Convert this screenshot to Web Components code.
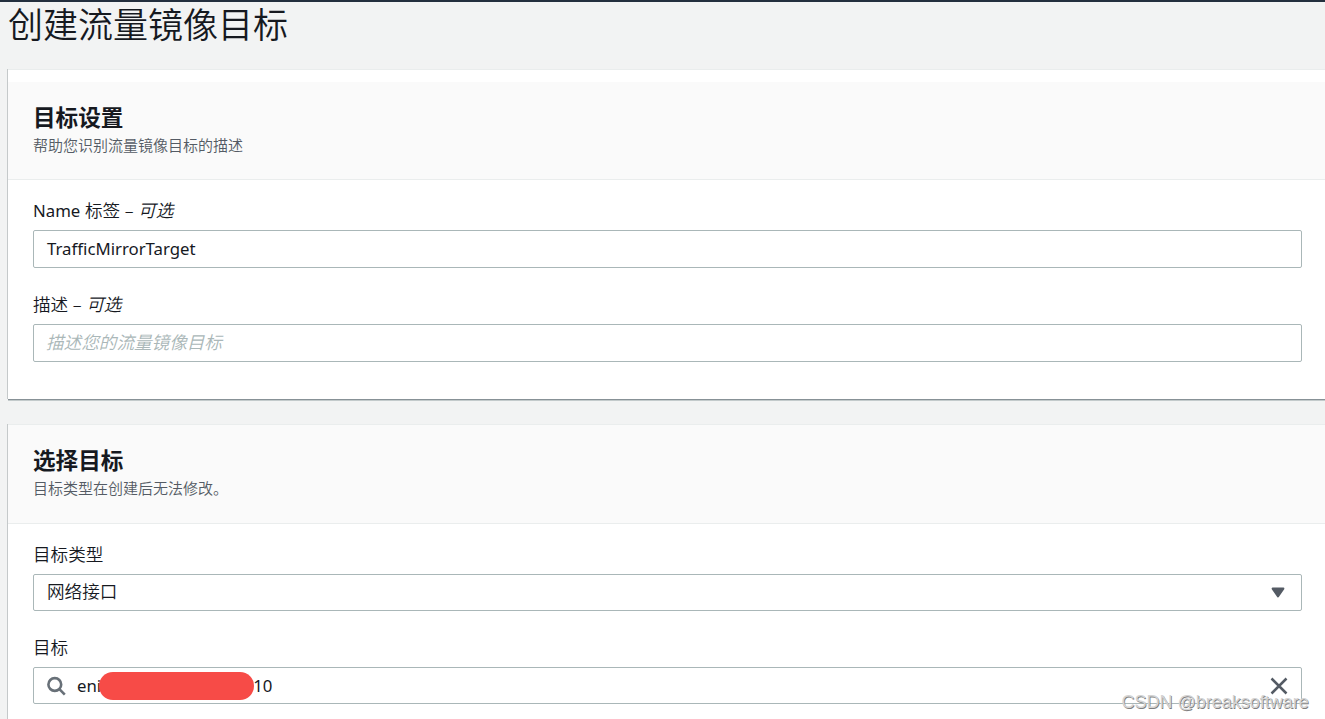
<!DOCTYPE html>
<html lang="zh-CN">
<head>
<meta charset="utf-8">
<title>创建流量镜像目标</title>
<style>
html,body{margin:0;height:719px;overflow:hidden;background:#f2f3f3}
body{font-family:"Noto Sans","Noto Sans CJK SC",sans-serif;color:#16191f}
</style>
</head>
<body>
<mirror-page>
  <mirror-panel class="first" heading="目标设置" note="帮助您识别流量镜像目标的描述">
    <form-field><span slot="label"><latin-text>Name</latin-text> 标签 – <i>可选</i></span>
      <text-box><latin-text>TrafficMirrorTarget</latin-text></text-box></form-field>
    <form-field><span slot="label">描述 – <i>可选</i></span>
      <text-box placeholder>描述您的流量镜像目标</text-box></form-field>
  </mirror-panel>
  <mirror-panel class="last" heading="选择目标" note="目标类型在创建后无法修改。">
    <form-field><span slot="label">目标类型</span>
      <text-box compact class="select">网络接口
        <svg slot="end" width="18" height="12" viewBox="0 0 18 12"><path d="M2.6 1.6h10.8L8 9.4z" fill="#545b64" stroke="#545b64" stroke-width="2" stroke-linejoin="round"/></svg>
      </text-box></form-field>
    <form-field><span slot="label">目标</span>
      <text-box compact>
        <svg slot="start" width="20" height="20" viewBox="0 0 20 20" fill="none" stroke="#687078" stroke-width="2.6"><circle cx="7.8" cy="8.5" r="6.4"/><path d="M12.4 13.2L17.8 18.6"/></svg>
        <redacted-value></redacted-value>
        <svg slot="end" width="18" height="18" viewBox="0 0 18 18" fill="none" stroke="#545b64" stroke-width="2.5"><path d="M1.5 1.5l15 15M16.5 1.5l-15 15"/></svg>
      </text-box></form-field>
  </mirror-panel>
</mirror-page>
<water-mark>CSDN @breaksoftware</water-mark>
<script>
const define = (name, html, setup) => customElements.define(name, class extends HTMLElement {
  constructor() {
    super();
    const t = document.createElement('template');
    t.innerHTML = html;
    this.attachShadow({mode: 'open'}).append(t.content.cloneNode(true));
    if (setup) setup(this, this.shadowRoot);
  }
});

define('latin-text', `<style>:host{display:inline;font-family:"Noto Sans",sans-serif;font-size:16.8px;font-weight:400}</style><slot></slot>`);

define('mirror-page', `<style>
:host{display:flex;flex-direction:column;box-sizing:border-box;height:719px;border-top:2px solid #232f3e;padding-left:8px}
h1{flex:none;margin:0;height:67px;font-size:35px;line-height:46px;font-weight:350;white-space:nowrap}
</style><h1>创建流量镜像目标</h1><slot></slot>`);

define('mirror-panel', `<style>
:host{display:block;box-sizing:border-box;flex:none;height:330px;margin-bottom:25px;background:#fff;border-top:1px solid #eaeded;box-shadow:-1px 0 0 #c5c9ca,0 1px 0 #879196,0 2px 0 #c3cacb}
:host(.first){padding-top:12px}
:host(.last){flex:1;height:auto;min-height:0;margin-bottom:0}
header{box-sizing:border-box;height:99px;padding:20px 25px 0;background:#fafafa;border-bottom:1px solid #eaeded}
:host(.first) header{height:98px}
h2{margin:0;font-size:22.6px;line-height:32px;font-weight:700}
p{margin:0;font-size:15px;line-height:23px;font-weight:350;color:#545b64}
section{display:flex;flex-direction:column;gap:23px;padding:17px 23px 0 25px}
</style><header><h2></h2><p></p></header><section><slot></slot></section>`, (el, root) => {
  root.querySelector('h2').textContent = el.getAttribute('heading');
  root.querySelector('p').textContent = el.getAttribute('note');
});

define('form-field', `<style>
:host{display:flex;flex-direction:column;font-size:17.6px;font-weight:350}
.label{height:33px;line-height:26px;white-space:nowrap}
</style><div class="label"><slot name="label"></slot></div><slot></slot>`);

define('text-box', `<style>
:host{display:flex;align-items:center;box-sizing:border-box;height:38px;padding:0 13px;border:1px solid #aab7b8;border-radius:2px;background:#fff;white-space:nowrap}
:host([compact]){height:37px}
:host([placeholder]){color:#aab7b8;font-style:italic;padding-left:12px}
.value{flex:1;line-height:26px;padding-bottom:2px}
:host(.select) .value{padding-bottom:4px}
::slotted(svg){flex:none;display:block}
</style><slot name="start"></slot><div class="value"><slot></slot></div><slot name="end"></slot>`);

define('redacted-value', `<style>
:host{display:flex;align-items:center;margin-left:10px;padding-top:2px;font-family:"Noto Sans",sans-serif;font-size:16.8px;font-weight:400}
.mask{width:155px;height:28px;border-radius:14px;background:#f74b47;margin:0 -1px 0 -2px}
</style><span>eni</span><span class="mask"></span><span>10</span>`);

define('water-mark', `<style>
:host{position:absolute;left:1121.5px;top:691px;font:18px/23px "Liberation Sans",sans-serif;color:#d4d4d4;text-shadow:.8px .8px 0 #808080;white-space:nowrap}
</style><slot></slot>`);
</script>
</body>
</html>
